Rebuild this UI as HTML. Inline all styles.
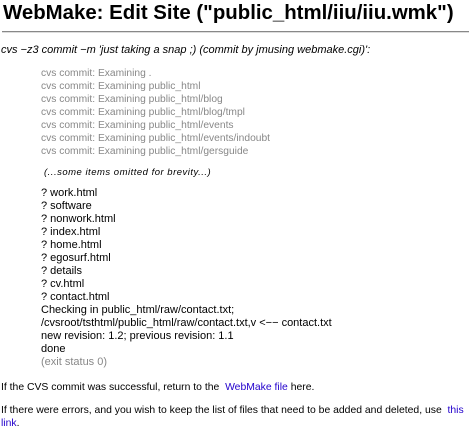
<!DOCTYPE html>
<html><head><style>
body{margin:0;background:#fff;font-family:"Liberation Sans",sans-serif;font-size:11px;color:#000;position:relative;width:471px;height:432px;overflow:hidden}
.a{position:absolute;white-space:nowrap;line-height:13px}
h1{position:absolute;left:3px;top:0;margin:0;font-size:20.4px;font-weight:bold;line-height:26px;white-space:nowrap}
hr{position:absolute;left:2px;top:31px;width:467px;margin:0;border:0;border-top:1px solid #888;border-bottom:1px solid #ddd}
.g{color:#888}
a{color:#2200cc;text-decoration:none}
</style></head><body>
<h1>WebMake: Edit Site ("public_html/iiu/iiu.wmk")</h1>
<hr>
<div class="a" style="left:1px;top:44px;font-style:italic">cvs −z3 commit −m 'just taking a snap ;) (commit by jmusing webmake.cgi)':</div>
<div class="a g" style="left:41px;top:67px;font-size:10.25px">cvs commit: Examining .<br>cvs commit: Examining public_html<br>cvs commit: Examining public_html/blog<br>cvs commit: Examining public_html/blog/tmpl<br>cvs commit: Examining public_html/events<br>cvs commit: Examining public_html/events/indoubt<br>cvs commit: Examining public_html/gersguide</div>
<div class="a" style="left:44px;top:166px;font-style:italic;font-size:9.5px;letter-spacing:0.5px">(...some items omitted for brevity...)</div>
<div class="a" style="left:41px;top:187px">? work.html<br>? software<br>? nonwork.html<br>? index.html<br>? home.html<br>? egosurf.html<br>? details<br>? cv.html<br>? contact.html<br>Checking in public_html/raw/contact.txt;<br>/cvsroot/tsthtml/public_html/raw/contact.txt,v &lt;−− contact.txt<br>new revision: 1.2; previous revision: 1.1<br>done<br><span class="g">(exit status 0)</span></div>
<div class="a" style="left:1px;top:381px;font-size:10.4px">If the CVS commit was successful, return to the &nbsp;<a>WebMake file</a> here.</div>
<div class="a" style="left:1px;top:404px;font-size:10.4px">If there were errors, and you wish to keep the list of files that need to be added and deleted, use &nbsp;<a>this</a><br><a>link</a>.</div>
</body></html>
